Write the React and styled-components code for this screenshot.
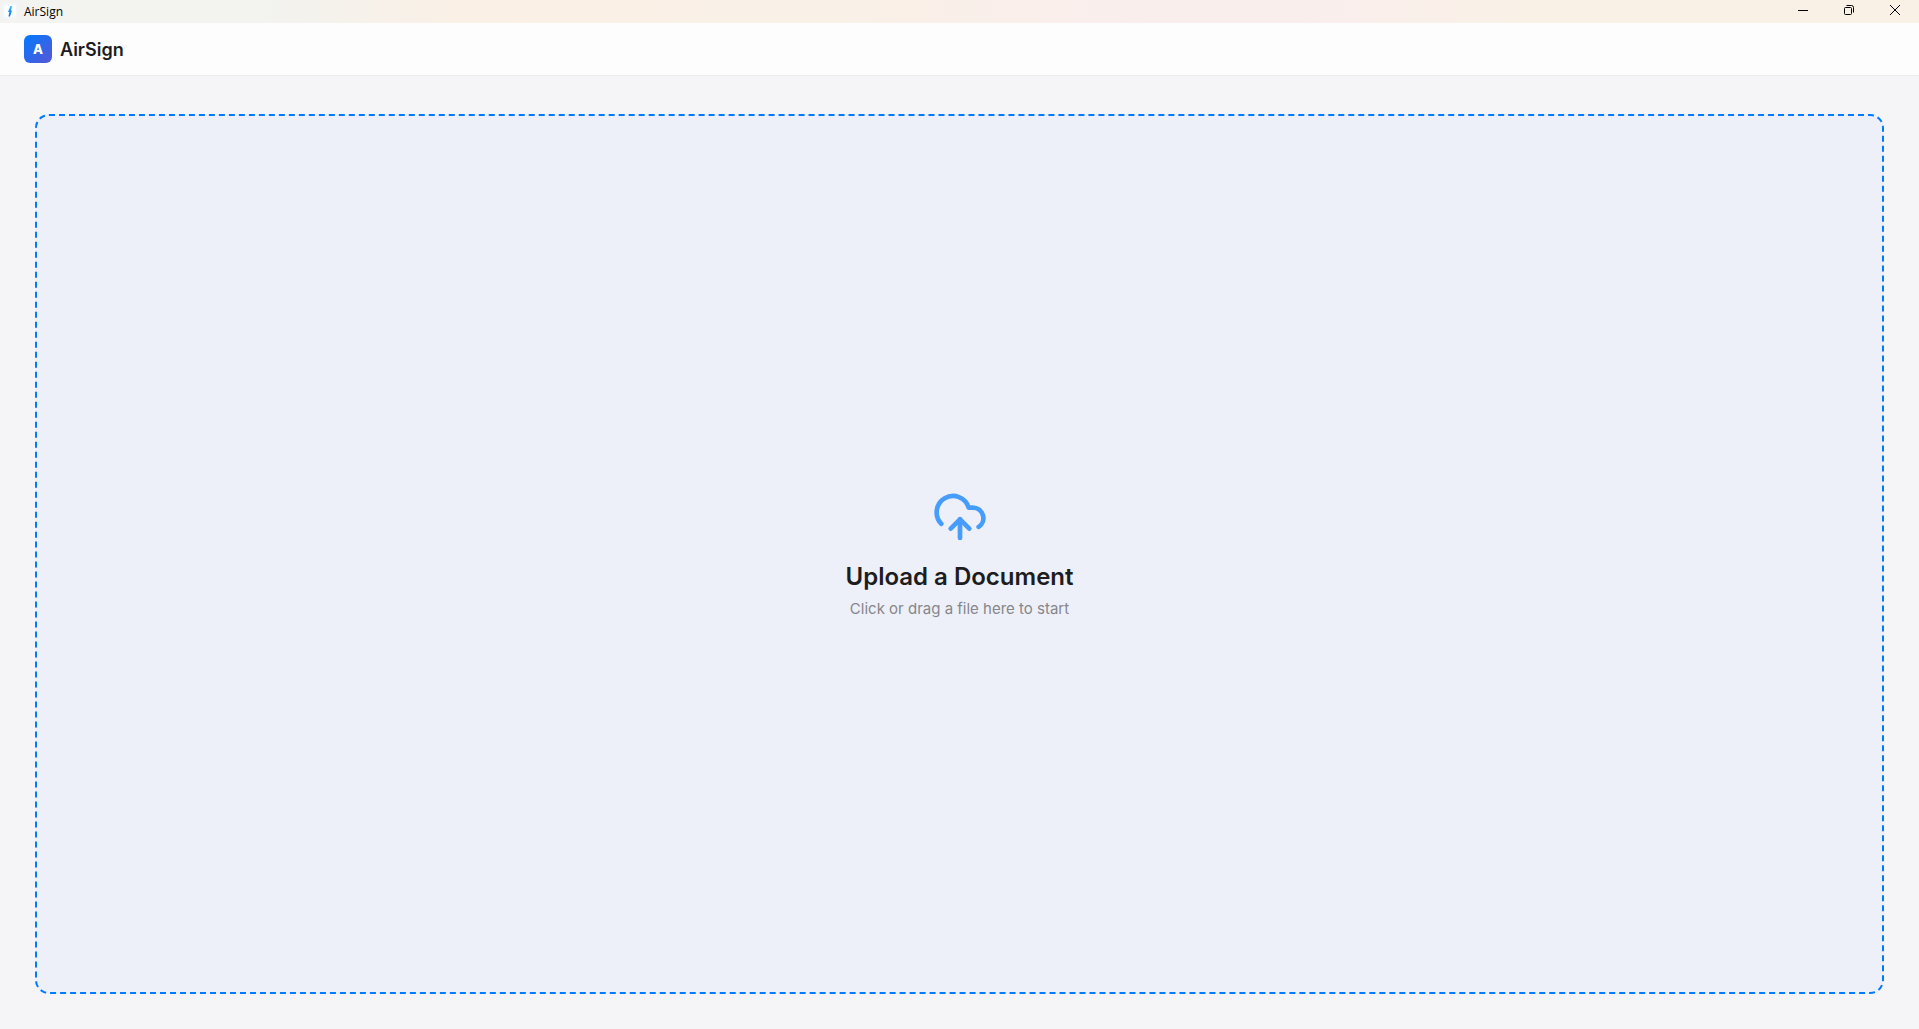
import React, { useState } from 'react'
import styled, { createGlobalStyle } from 'styled-components'
import { CloudUpload } from 'lucide-react'

const App = () => {
  const [fileName, setFileName] = useState('')

  const handleFile = files => {
    if (files && files.length) setFileName(files[0].name)
  }

  const handleDrop = e => {
    e.preventDefault()
    handleFile(e.dataTransfer.files)
  }

  return (
    <Window>
      <GlobalStyle />
      <TitleBar>
        <AppIcon viewBox="0 0 16 16" aria-hidden="true">
          <defs>
            <linearGradient id="bolt" x1="0" y1="0" x2="0" y2="1">
              <stop offset="0" stopColor="#32b8fa" />
              <stop offset="1" stopColor="#0a74f0" />
            </linearGradient>
          </defs>
          <rect width="16" height="16" fill="#f3f6f9" />
          <rect x="2" y="2" width="12" height="12" rx="3" fill="#fcfdfe" />
          <path d="M8.500 3 6 9H7.300L6.500 13.500H8L10 7.500H9L10 3z" fill="url(#bolt)" />
        </AppIcon>
        <WindowTitle>AirSign</WindowTitle>
        <WindowButton aria-label="Minimize">
          <svg viewBox="0 0 10 10">
            <path d="M0 5.500h10" />
          </svg>
        </WindowButton>
        <WindowButton aria-label="Restore">
          <svg viewBox="0 0 10 10">
            <rect x="0.500" y="2.500" width="7" height="7" rx="1" />
            <path d="M2.500 0.500h5a2 2 0 0 1 2 2v5" />
          </svg>
        </WindowButton>
        <WindowButton aria-label="Close">
          <svg viewBox="0 0 10 10">
            <path d="M0 0l10 10M10 0L0 10" />
          </svg>
        </WindowButton>
      </TitleBar>

      <Header>
        <Logo>A</Logo>
        <Brand>AirSign</Brand>
      </Header>

      <Main>
        <DropZone
          htmlFor="document"
          onDragOver={e => e.preventDefault()}
          onDrop={handleDrop}
        >
          <UploadIcon size={56} />
          <Headline>Upload a Document</Headline>
          <Hint>{fileName || 'Click or drag a file here to start'}</Hint>
          <FileInput
            id="document"
            type="file"
            onChange={e => handleFile(e.target.files)}
          />
        </DropZone>
      </Main>
    </Window>
  )
}

const GlobalStyle = createGlobalStyle`
  * {
    box-sizing: border-box;
  }

  body {
    background: #f5f5f7;
    color: #1d1d1f;
    font-family: Inter, sans-serif;
    margin: 0;
  }
`

const Window = styled.div`
  display: flex;
  flex-direction: column;
  min-height: 100vh;
`

const TitleBar = styled.div`
  align-items: flex-start;
  background: linear-gradient(
    90deg,
    #f3f3f1 0%,
    #f3f3ef 14%,
    #faf0e6 24%,
    #f9f0e7 45%,
    #faeeed 60%,
    #faeeed 68%,
    #f9f1e6 80%,
    #f9f1e6 100%
  );
  display: flex;
  height: 23px;
  padding-right: 1px;
`

const AppIcon = styled.svg`
  height: 16px;
  margin: 3px 6px 0 2px;
  width: 16px;
`

const WindowTitle = styled.span`
  color: #000;
  flex: 1;
  font-family: 'Open Sans', sans-serif;
  font-size: 12px;
  line-height: 23px;
`

const WindowButton = styled.button`
  align-items: center;
  background: transparent;
  border: 0;
  display: flex;
  height: 20px;
  justify-content: center;
  padding: 0;
  width: 46px;

  &:hover {
    background: rgba(0, 0, 0, 0.06);
  }

  > svg {
    fill: none;
    height: 10px;
    stroke: #000;
    width: 10px;
  }
`

const Header = styled.header`
  align-items: center;
  background: #fdfdfe;
  border-bottom: 1px solid #ececee;
  display: flex;
  gap: 8px;
  padding: 12px 24px;
`

const Logo = styled.span`
  align-items: center;
  background: linear-gradient(135deg, #007aff, #5856d6);
  border-radius: 6px;
  color: #fff;
  display: flex;
  font-size: 13px;
  font-weight: 800;
  height: 28px;
  justify-content: center;
  width: 28px;
`

const Brand = styled.h1`
  font-size: 18px;
  font-weight: 600;
  line-height: 25px;
  margin: 0;
`

const Main = styled.main`
  display: flex;
  flex: 1;
  padding: 38px 35px 35px;
`

const DropZone = styled.label`
  align-items: center;
  background: #edf0f8;
  border: 2px dashed #007aff;
  border-radius: 14px;
  cursor: pointer;
  display: flex;
  flex: 1;
  flex-direction: column;
  justify-content: center;
  padding-top: 2px;
  position: relative;
`

const UploadIcon = styled(CloudUpload)`
  color: #007aff;
  margin-bottom: 16px;
  opacity: 0.7;
`

const Headline = styled.span`
  font-size: 24px;
  font-weight: 600;
  line-height: 32px;
`

const Hint = styled.span`
  color: #86868b;
  font-size: 15px;
  line-height: 24px;
  margin-top: 4px;
`

const FileInput = styled.input`
  height: 1px;
  opacity: 0;
  position: absolute;
  width: 1px;
`

export default App
